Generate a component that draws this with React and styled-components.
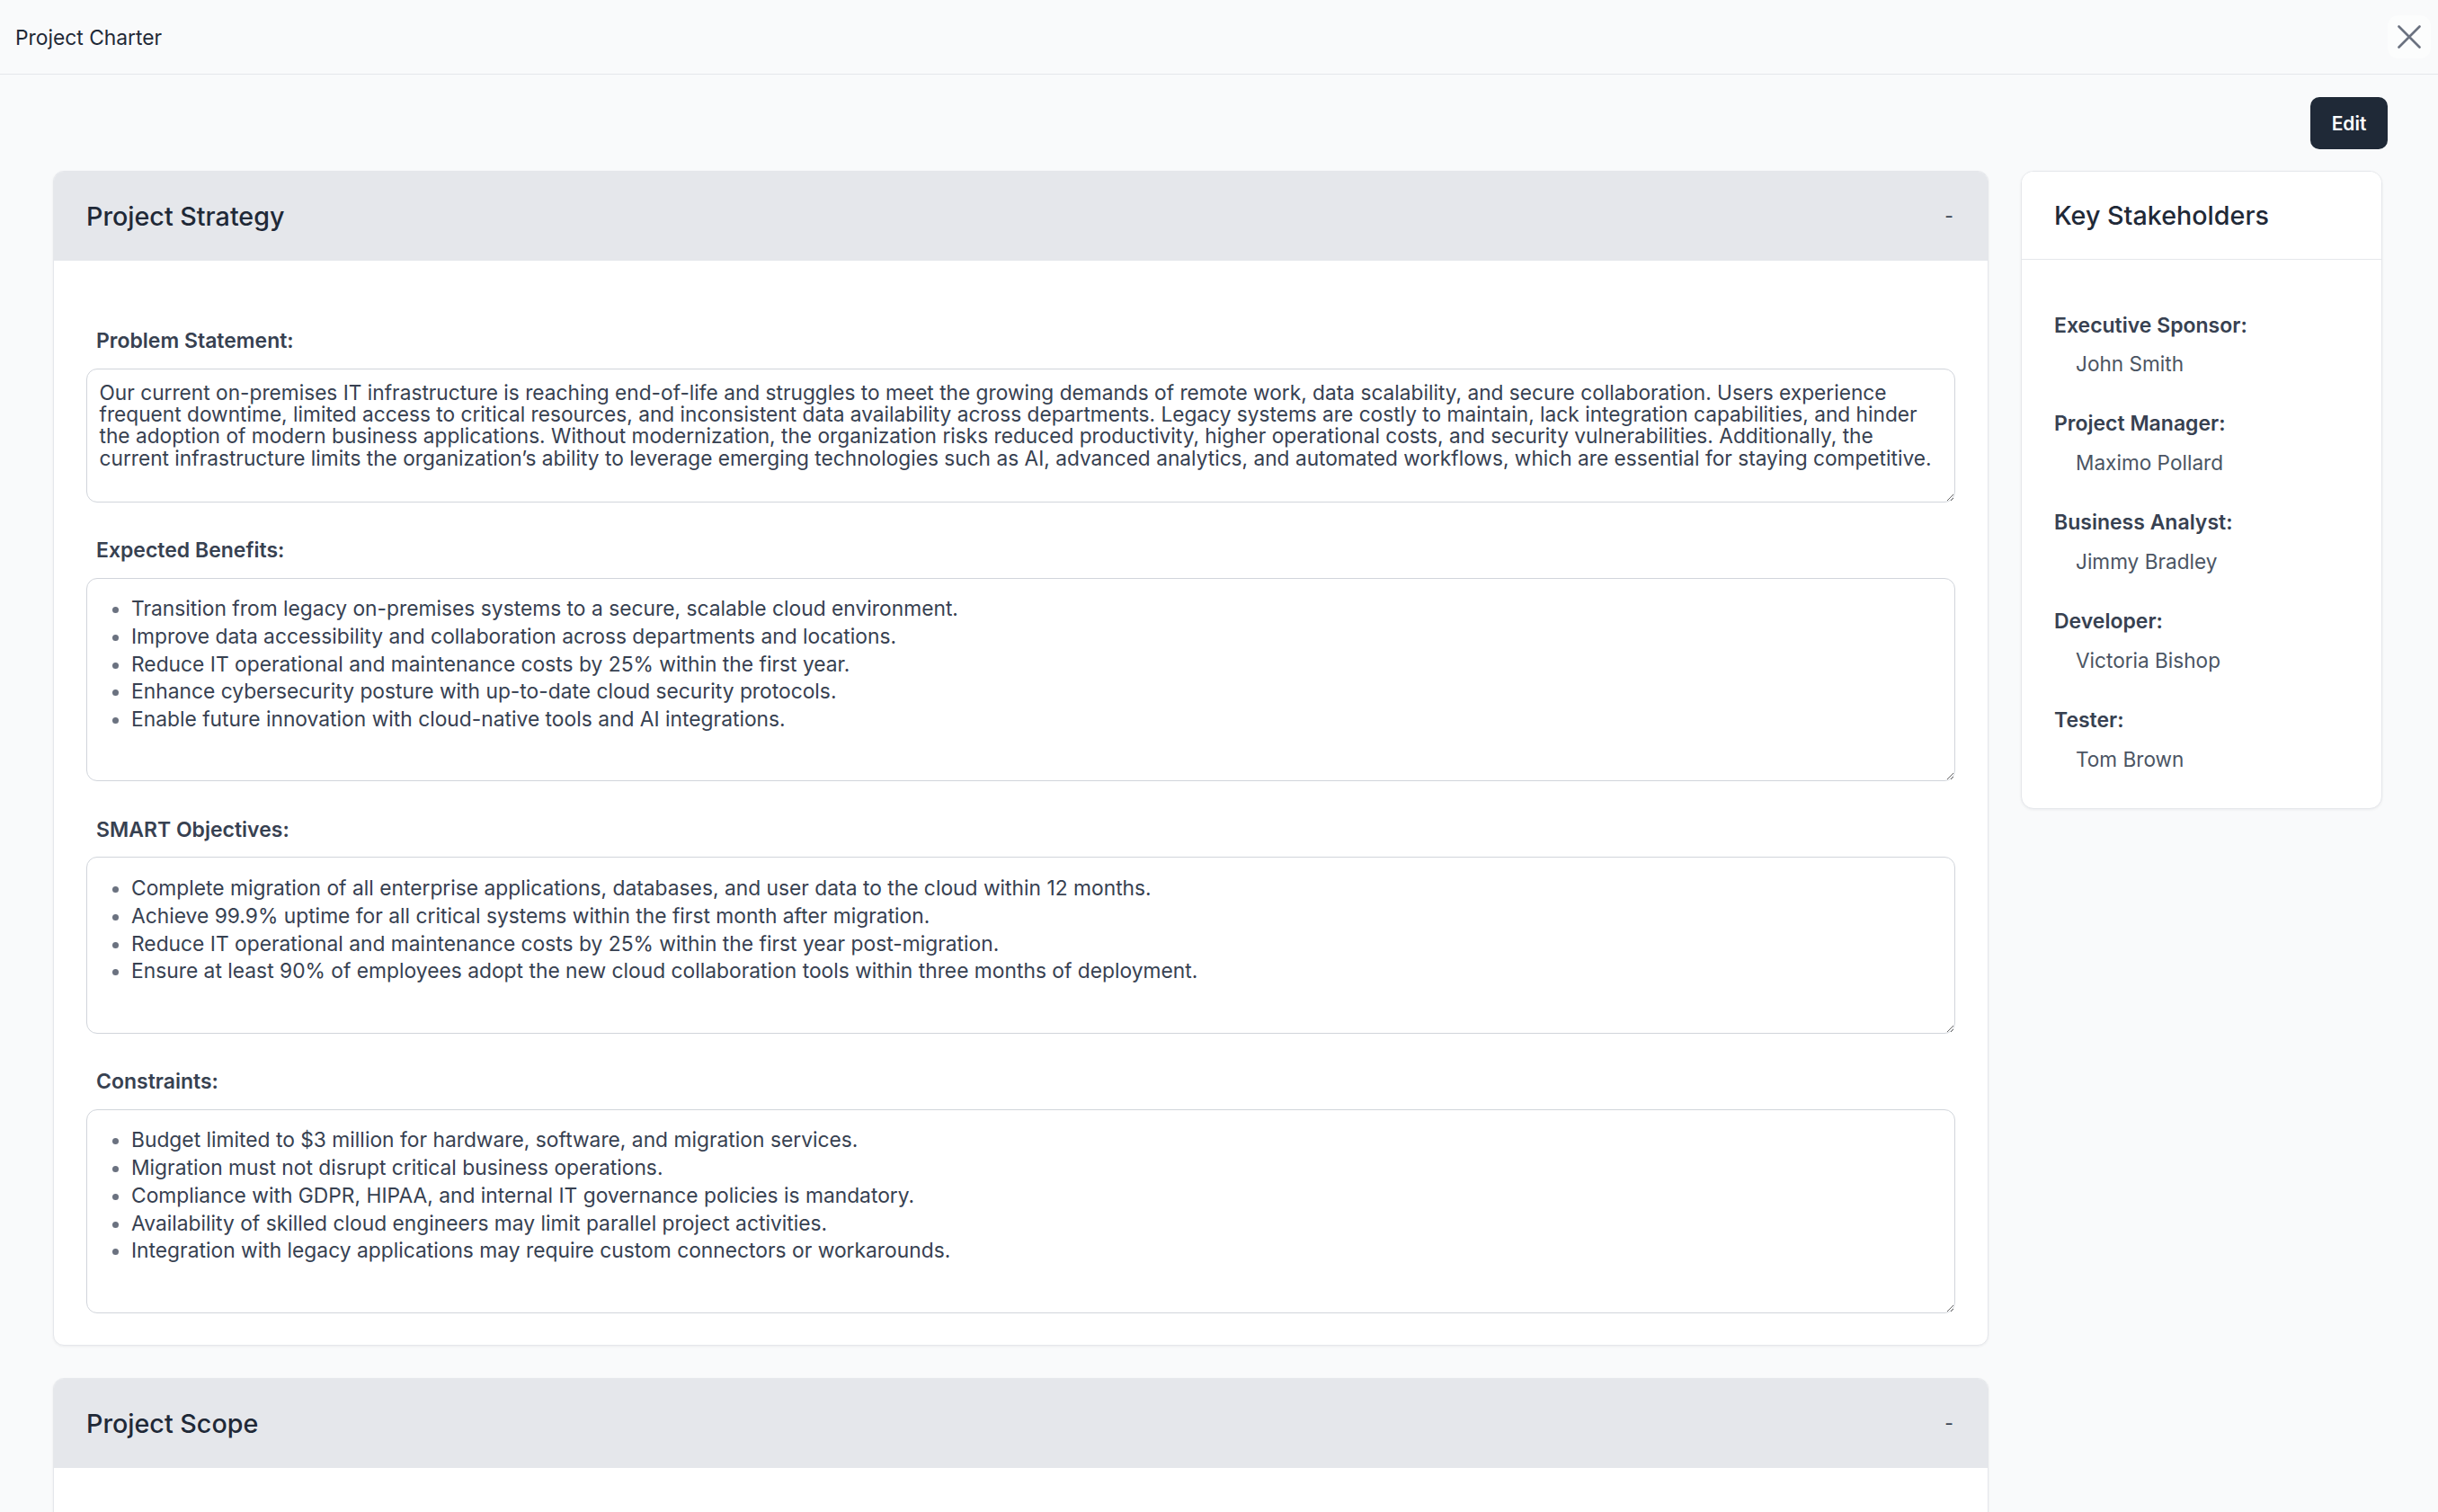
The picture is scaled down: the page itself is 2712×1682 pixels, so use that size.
import React from 'react';
import styled, { createGlobalStyle } from 'styled-components';

const GlobalStyle = createGlobalStyle`
  * { box-sizing: border-box; }
  html, body {
    margin: 0;
    padding: 0;
    background: #f9fafb;
  }
  body {
    font-family: Inter, "Noto Sans", sans-serif;
    color: #1f2937;
  }
`;

const problem =
  'Our current on-premises IT infrastructure is reaching end-of-life and struggles to meet the growing demands of remote work, data scalability, and secure collaboration. Users experience frequent downtime, limited access to critical resources, and inconsistent data availability across departments. Legacy systems are costly to maintain, lack integration capabilities, and hinder the adoption of modern business applications. Without modernization, the organization risks reduced productivity, higher operational costs, and security vulnerabilities. Additionally, the current infrastructure limits the organization\u2019s ability to leverage emerging technologies such as AI, advanced analytics, and automated workflows, which are essential for staying competitive.';

const benefits = [
  'Transition from legacy on-premises systems to a secure, scalable cloud environment.',
  'Improve data accessibility and collaboration across departments and locations.',
  'Reduce IT operational and maintenance costs by 25% within the first year.',
  'Enhance cybersecurity posture with up-to-date cloud security protocols.',
  'Enable future innovation with cloud-native tools and AI integrations.',
];

const objectives = [
  'Complete migration of all enterprise applications, databases, and user data to the cloud within 12 months.',
  'Achieve 99.9% uptime for all critical systems within the first month after migration.',
  'Reduce IT operational and maintenance costs by 25% within the first year post-migration.',
  'Ensure at least 90% of employees adopt the new cloud collaboration tools within three months of deployment.',
];

const constraints = [
  'Budget limited to $3 million for hardware, software, and migration services.',
  'Migration must not disrupt critical business operations.',
  'Compliance with GDPR, HIPAA, and internal IT governance policies is mandatory.',
  'Availability of skilled cloud engineers may limit parallel project activities.',
  'Integration with legacy applications may require custom connectors or workarounds.',
];

const inScope = [
  'Migration of enterprise applications, databases, and file shares to the cloud.',
  'Deployment of cloud collaboration and identity management tools.',
];

const stakeholders = [
  { role: 'Executive Sponsor', name: 'John Smith' },
  { role: 'Project Manager', name: 'Maximo Pollard' },
  { role: 'Business Analyst', name: 'Jimmy Bradley' },
  { role: 'Developer', name: 'Victoria Bishop' },
  { role: 'Tester', name: 'Tom Brown' },
];

function App() {
  return (
    <>
      <GlobalStyle />
      <TopBar>
        <PageTitle>Project Charter</PageTitle>
        <CloseButton aria-label='Close'>
          <svg width='26' height='26' viewBox='0 0 26 26' fill='none'>
            <path
              d='M1.5 1.5L24.5 24.5M24.5 1.5L1.5 24.5'
              stroke='currentColor'
              strokeWidth='2.6'
              strokeLinecap='round'
            />
          </svg>
        </CloseButton>
      </TopBar>

      <Toolbar>
        <EditButton>Edit</EditButton>
      </Toolbar>

      <Main>
        <Column>
          <Card>
            <SectionHeader $tone='gray'>
              <SectionTitle>Project Strategy</SectionTitle>
              <CollapseButton aria-label='Collapse'>-</CollapseButton>
            </SectionHeader>
            <SectionBody>
              <Field>
                <FieldLabel>Problem Statement:</FieldLabel>
                <TextBox readOnly spellCheck={false} defaultValue={problem} />
              </Field>
              <Field>
                <FieldLabel>Expected Benefits:</FieldLabel>
                <ListBox>
                  <BulletList>
                    {benefits.map((item) => (
                      <li key={item}>{item}</li>
                    ))}
                  </BulletList>
                </ListBox>
              </Field>
              <Field>
                <FieldLabel>SMART Objectives:</FieldLabel>
                <ListBox>
                  <BulletList>
                    {objectives.map((item) => (
                      <li key={item}>{item}</li>
                    ))}
                  </BulletList>
                </ListBox>
              </Field>
              <Field>
                <FieldLabel>Constraints:</FieldLabel>
                <ListBox>
                  <BulletList>
                    {constraints.map((item) => (
                      <li key={item}>{item}</li>
                    ))}
                  </BulletList>
                </ListBox>
              </Field>
            </SectionBody>
          </Card>

          <Card>
            <SectionHeader $tone='gray'>
              <SectionTitle>Project Scope</SectionTitle>
              <CollapseButton aria-label='Collapse'>-</CollapseButton>
            </SectionHeader>
            <SectionBody>
              <Field>
                <FieldLabel>In Scope:</FieldLabel>
                <ListBox>
                  <BulletList>
                    {inScope.map((item) => (
                      <li key={item}>{item}</li>
                    ))}
                  </BulletList>
                </ListBox>
              </Field>
            </SectionBody>
          </Card>
        </Column>

        <Sidebar>
          <SectionHeader $tone='white'>
            <SidebarTitle>Key Stakeholders</SidebarTitle>
          </SectionHeader>
          <StakeholderList>
            {stakeholders.map((s) => (
              <Stakeholder key={s.role}>
                <RoleLabel>{s.role}:</RoleLabel>
                <PersonName>{s.name}</PersonName>
              </Stakeholder>
            ))}
          </StakeholderList>
        </Sidebar>
      </Main>
    </>
  );
}

const TopBar = styled.header`
  height: 83px;
  display: flex;
  align-items: center;
  justify-content: space-between;
  padding: 0 8px 0 17px;
  border-bottom: 1px solid #e5e7eb;
`;

const PageTitle = styled.h1`
  margin: 0;
  font-size: 22.8px;
  font-weight: 400;
  color: #1f2937;
`;

const CloseButton = styled.button`
  width: 48px;
  height: 48px;
  padding: 0;
  border: none;
  border-radius: 12px;
  background: rgba(255, 255, 255, 0.55);
  color: #6b7280;
  display: flex;
  align-items: center;
  justify-content: center;
  cursor: pointer;
`;

const Toolbar = styled.div`
  display: flex;
  justify-content: flex-end;
  padding: 25px 56px 0 0;
`;

const EditButton = styled.button`
  width: 86px;
  height: 58px;
  border: none;
  border-radius: 10px;
  background: #1f2937;
  color: #ffffff;
  font-family: Inter, sans-serif;
  font-size: 21px;
  font-weight: 600;
  cursor: pointer;
`;

const Main = styled.main`
  display: flex;
  align-items: flex-start;
  gap: 36px;
  padding: 24px 62px 40px 59px;
`;

const Column = styled.div`
  flex: 1;
  min-width: 0;
  display: flex;
  flex-direction: column;
  gap: 35.5px;
`;

const Card = styled.section`
  background: #ffffff;
  border: 1px solid #e5e7eb;
  border-radius: 12px;
  box-shadow: 0 1px 3px rgba(16, 24, 40, 0.06);
  overflow: hidden;
`;

const SectionHeader = styled.div`
  height: ${(p) => (p.$tone === 'gray' ? '99px' : '98px')};
  display: flex;
  align-items: center;
  justify-content: space-between;
  padding: 0 36px;
  background: ${(p) => (p.$tone === 'gray' ? '#e5e7eb' : '#ffffff')};
  border-bottom: ${(p) => (p.$tone === 'gray' ? 'none' : '1px solid #e5e7eb')};
`;

const SectionTitle = styled.h2`
  margin: 0;
  font-size: 28.7px;
  font-weight: 500;
  color: #1f2937;
`;

const CollapseButton = styled.button`
  border: none;
  background: transparent;
  padding: 0 2px;
  font-family: Inter, sans-serif;
  font-size: 21px;
  color: #374151;
  cursor: pointer;
`;

const SectionBody = styled.div`
  padding: 76px 36px 35.5px;
  display: flex;
  flex-direction: column;
  gap: 40.5px;
`;

const Field = styled.div`
  display: flex;
  flex-direction: column;
`;

const FieldLabel = styled.label`
  display: block;
  margin: 0 0 16.5px 11px;
  font-size: 23px;
  line-height: 27px;
  font-weight: 600;
  color: #374151;
`;

const TextBox = styled.textarea`
  display: block;
  width: 100%;
  height: 149px;
  margin: 0;
  padding: 14.5px 13.5px;
  border: 1px solid #d1d5db;
  border-radius: 12px;
  background: #ffffff;
  font-family: Inter, sans-serif;
  font-size: 22.7px;
  line-height: 24.2px;
  color: #374151;
  resize: vertical;
  outline: none;
`;

const ListBox = styled.div`
  border: 1px solid #d1d5db;
  border-radius: 12px;
  background: #ffffff;
  padding: 18.5px 14px 52.5px;
  resize: vertical;
  overflow: auto;
`;

const BulletList = styled.ul`
  margin: 0;
  padding-left: 35px;
  list-style: disc;
  font-size: 22.8px;
  line-height: 30.8px;
  color: #374151;

  li::marker {
    color: #6b7280;
  }
`;

const Sidebar = styled.aside`
  width: 402px;
  flex-shrink: 0;
  background: #ffffff;
  border: 1px solid #e5e7eb;
  border-radius: 14px;
  box-shadow: 0 1px 3px rgba(16, 24, 40, 0.06);
  overflow: hidden;
`;

const SidebarTitle = styled.h2`
  margin: 0;
  font-size: 28.7px;
  font-weight: 500;
  color: #1f2937;
`;

const StakeholderList = styled.div`
  padding: 58.5px 36px 40px;
  display: flex;
  flex-direction: column;
  gap: 38.4px;
`;

const Stakeholder = styled.div`
  display: flex;
  flex-direction: column;
  gap: 13.6px;
`;

const RoleLabel = styled.div`
  font-size: 23px;
  line-height: 29px;
  font-weight: 600;
  color: #374151;
`;

const PersonName = styled.div`
  padding-left: 24px;
  font-size: 22.6px;
  line-height: 29px;
  color: #4b5563;
`;

export default App;
